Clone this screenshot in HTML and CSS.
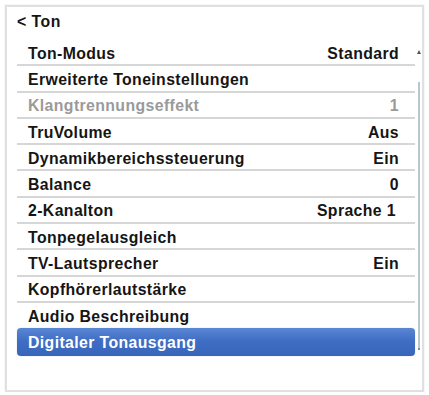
FILE: index.html
```html
<!DOCTYPE html>
<html>
<head>
<meta charset="utf-8">
<link rel="stylesheet" href="styles.css">
</head>
<body>
<div class="frame">
  <div class="header">&lt; Ton</div>
  <div class="body">
    <div class="list">
      <div class="row"><span>Ton-Modus</span><span>Standard</span></div>
      <div class="row"><span>Erweiterte Toneinstellungen</span><span></span></div>
      <div class="row dim"><span>Klangtrennungseffekt</span><span>1</span></div>
      <div class="row"><span>TruVolume</span><span>Aus</span></div>
      <div class="row"><span>Dynamikbereichssteuerung</span><span>Ein</span></div>
      <div class="row"><span>Balance</span><span>0</span></div>
      <div class="row"><span>2-Kanalton</span><span class="v2">Sprache 1</span></div>
      <div class="row"><span>Tonpegelausgleich</span><span></span></div>
      <div class="row"><span>TV-Lautsprecher</span><span>Ein</span></div>
      <div class="row"><span>Kopfhörerlautstärke</span><span></span></div>
      <div class="row noline"><span>Audio Beschreibung</span><span></span></div>
      <div class="row sel"><span>Digitaler Tonausgang</span><span></span></div>
    </div>
    <div class="scroll">
      <div class="arrow"></div>
      <div class="track"></div>
    </div>
  </div>
</div>
</body>
</html>
```
FILE: styles.css
```css
html, body {
  margin: 0;
  padding: 0;
  background: #ffffff;
}
body {
  font-family: "Liberation Sans", Arial, sans-serif;
  font-weight: bold;
  color: #151515;
}
.frame {
  margin: 5px 0 0 5px;
  width: 415px;
  height: 383px;
  border: 2px solid #e0e0e0;
  box-shadow: 0 0 1px #cfcfcf;
  background: #fff;
  display: flex;
  flex-direction: column;
}
.header {
  height: 33px;
  box-sizing: border-box;
  padding: 6px 0 0 10px;
  font-size: 15.8px;
  letter-spacing: 0.5px;
}
.body {
  display: flex;
  flex-direction: row;
}
.list {
  margin-left: 10px;
  width: 399px;
  display: flex;
  flex-direction: column;
}
.row {
  height: 26.3px;
  box-sizing: border-box;
  border-bottom: 2px solid #d6d6d6;
  display: flex;
  justify-content: space-between;
  align-items: center;
  padding: 3px 16px 0 11px;
  font-size: 15.8px;
  letter-spacing: 0.4px;
}
.row .v2 {
  margin-right: 3px;
}
.row.dim {
  color: #9a9a9a;
}
.row.noline {
  border-bottom-color: transparent;
}
.row.sel {
  border-bottom: none;
  height: 28px;
  margin-top: -1px;
  padding-top: 1px;
  color: #fff;
  border-radius: 4px;
  background: linear-gradient(to bottom, #5a86d4 0%, #3f6ec4 45%, #3765ba 100%);
  box-shadow: 0 0 1px rgba(40,80,160,0.5);
}
.scroll {
  width: 7px;
  display: flex;
  flex-direction: column;
  align-items: center;
}
.arrow {
  margin-top: 10px;
  width: 0;
  height: 0;
  border-left: 2px solid transparent;
  border-right: 2px solid transparent;
  border-bottom: 4px solid #555;
}
.track {
  margin-top: 28px;
  width: 2px;
  height: 266px;
  background: #b9c4d6;
  border-bottom: 2px solid #7f8fa8;
}
```
